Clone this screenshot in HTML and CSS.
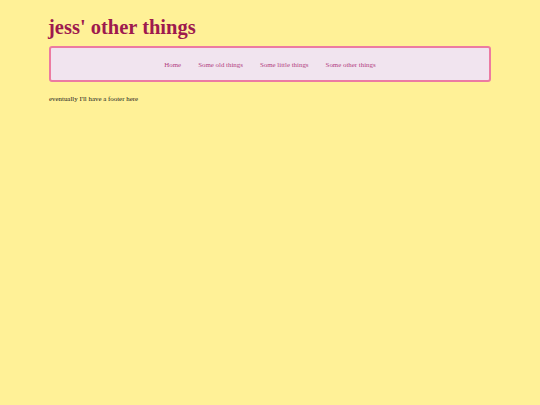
FILE: index.html
```html
<!DOCTYPE html>
<html>
<head>
<meta charset="utf-8">
<link rel="stylesheet" href="styles.css">
</head>
<body>
<div class="page">
  <h1 class="title">jess' other things</h1>
  <nav class="nav">
    <a href="#">Home</a>
    <a href="#">Some old things</a>
    <a href="#">Some little things</a>
    <a href="#">Some other things</a>
  </nav>
  <footer class="footer">eventually I'll have a footer here</footer>
</div>
</body>
</html>
```
FILE: styles.css
```css
html, body {
  margin: 0;
  padding: 0;
  background: #fff197;
}
body {
  font-family: "Liberation Serif", "DejaVu Serif", serif;
}
.page {
  margin: 0 49px 0 49px;
  padding-top: 16px;
}
.title {
  margin: 0 0 8px -1px;
  font-family: "Liberation Serif", serif;
  font-size: 20.5px;
  font-weight: bold;
  color: #9e1a4e;
  line-height: 22px;
}
.nav {
  display: flex;
  justify-content: center;
  gap: 17px;
  height: 32px;
  align-items: center;
  background: #f1e4ef;
  border: 2px solid #ec7ba2;
  border-radius: 3px;
}
.nav a {
  font-size: 6.9px;
  color: #b2407f;
  text-decoration: none;
}
.footer {
  margin-top: 13px;
  font-size: 6.9px;
  color: #222;
}
```
